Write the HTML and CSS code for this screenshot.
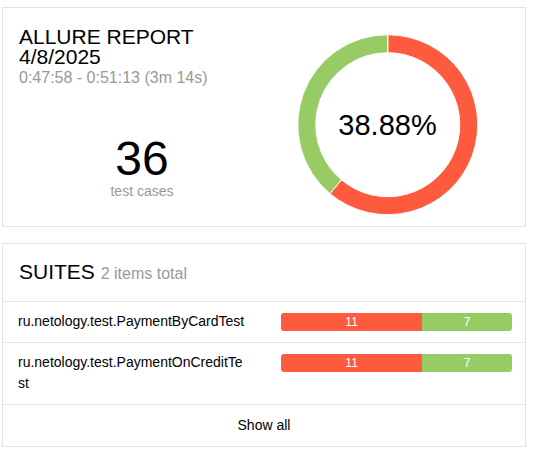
FILE: index.html
```html
<!DOCTYPE html>
<html lang="en">
<head>
<meta charset="utf-8">
<title>Allure Report</title>
<link rel="stylesheet" href="styles.css">
</head>
<body>
<div class="page">
  <section class="card summary">
    <div class="summary__info">
      <div class="summary__title">
        <div class="title-line">ALLURE REPORT</div>
        <div class="title-line">4/8/2025</div>
        <div class="summary__time">0:47:58 - 0:51:13 (3m 14s)</div>
      </div>
      <div class="summary__count">
        <div class="count-value">36</div>
        <div class="count-label">test cases</div>
      </div>
    </div>
    <div class="summary__chart">
      <svg class="donut" width="245" height="218" viewBox="0 0 245 218">
        <g transform="translate(122.75 116.7)">
          <path d="M0,-90 A90,90 0 1 1 -57.85,68.94 L-46.28,55.15 A72,72 0 1 0 0,-72 Z" fill="#fd5a3e" stroke="#fff" stroke-width="1"/>
          <path d="M-57.85,68.94 A90,90 0 0 1 0,-90 L0,-72 A72,72 0 0 0 -46.28,55.15 Z" fill="#97cc64" stroke="#fff" stroke-width="1"/>
        </g>
      </svg>
      <div class="donut__label">38.88%</div>
    </div>
  </section>

  <section class="card suites">
    <div class="suites__header">SUITES <span class="suites__total">2 items total</span></div>
    <div class="suite-row">
      <div class="suite-name">ru.netology.test.PaymentByCardTest</div>
      <div class="bar">
        <div class="bar__seg bar__seg--failed" style="flex: 11">11</div>
        <div class="bar__seg bar__seg--passed" style="flex: 7">7</div>
      </div>
    </div>
    <div class="suite-row">
      <div class="suite-name">ru.netology.test.PaymentOnCreditTest</div>
      <div class="bar">
        <div class="bar__seg bar__seg--failed" style="flex: 11">11</div>
        <div class="bar__seg bar__seg--passed" style="flex: 7">7</div>
      </div>
    </div>
    <div class="suites__footer">Show all</div>
  </section>
</div>
</body>
</html>
```
FILE: styles.css
```css
html, body {
  margin: 0;
  padding: 0;
  background: #fff;
}

body {
  font-family: "Liberation Sans", Arial, sans-serif;
  font-size: 14px;
  color: #000;
}

.page {
  padding: 7px 0 0 2px;
  width: 524px;
  display: flex;
  flex-direction: column;
  gap: 16px;
}

.card {
  border: 1px solid #e4e4e4;
  background: #fff;
}

/* Summary card */
.summary {
  height: 218px;
  padding: 0 15px 0 16px;
  display: grid;
  grid-template-columns: 1fr 245px;
}

.summary__info {
  padding-top: 19px;
  display: flex;
  flex-direction: column;
}

.title-line {
  font-size: 21px;
  line-height: 20px;
}

.summary__time {
  font-size: 16px;
  line-height: 22px;
  color: #999;
}

.summary__count {
  margin-top: 46px;
  text-align: center;
}

.count-value {
  font-size: 48px;
  line-height: 48px;
}

.count-label {
  font-size: 14px;
  line-height: 16px;
  color: #999;
}

.summary__chart {
  position: relative;
}

.donut {
  display: block;
}

.donut__label {
  position: absolute;
  left: 0;
  width: 245px;
  top: 100px;
  line-height: 34px;
  font-size: 29px;
  text-align: center;
}

/* Suites card */
.suites__header {
  font-size: 21px;
  line-height: 24px;
  padding: 16px 16px 15px;
  border-bottom: 1px solid #e4e4e4;
}

.suites__total {
  font-size: 16px;
  color: #999;
}

.suite-row {
  display: grid;
  grid-template-columns: 228px 231px;
  justify-content: space-between;
  align-items: start;
  padding: 9px 13px 10px 15px;
  border-bottom: 1px solid #e4e4e4;
  line-height: 21px;
}

.suite-name {
  word-break: break-all;
}

.bar {
  display: flex;
  height: 18px;
  margin-top: 2px;
  border-radius: 3px;
  overflow: hidden;
}

.bar__seg {
  color: #fff;
  font-size: 12px;
  line-height: 18px;
  text-align: center;
}

.bar__seg--failed {
  background: #fd5a3e;
}

.bar__seg--passed {
  background: #97cc64;
}

.suites__footer {
  text-align: center;
  padding: 10px 0;
  line-height: 21px;
}
```
